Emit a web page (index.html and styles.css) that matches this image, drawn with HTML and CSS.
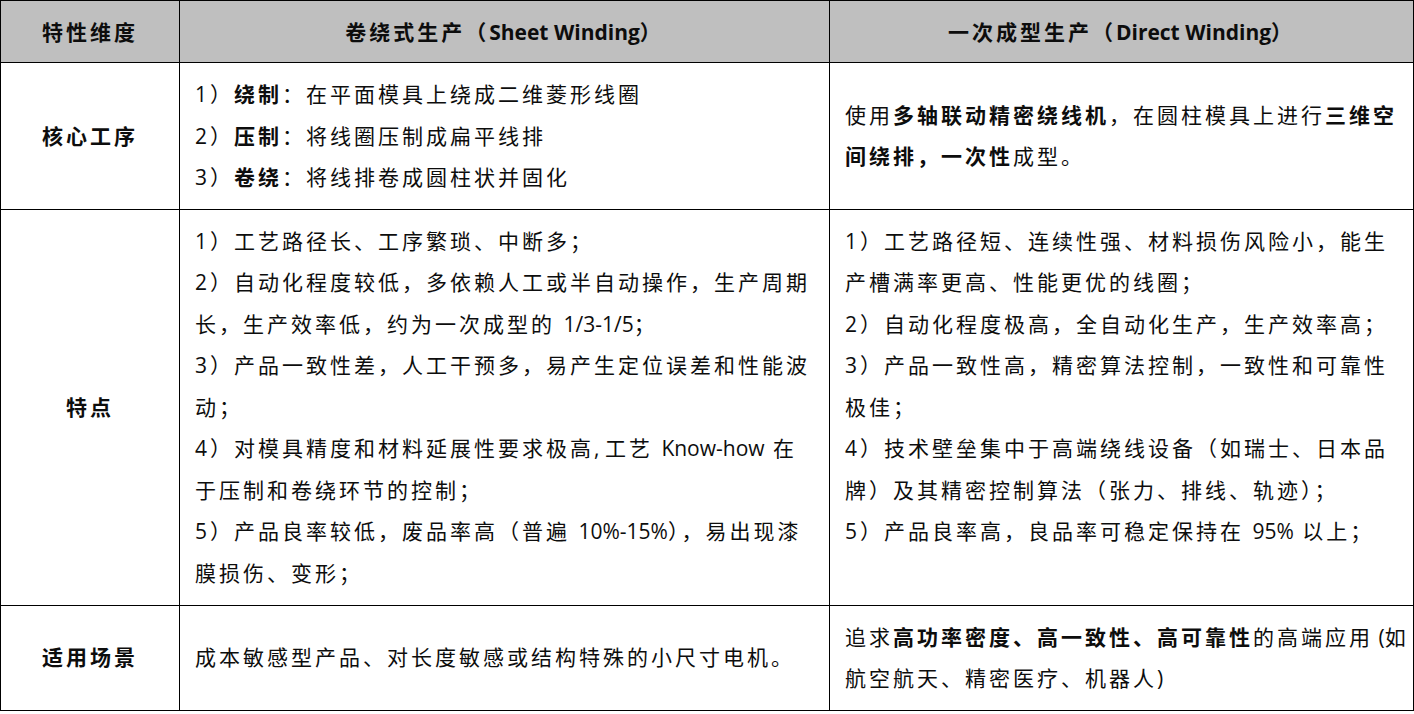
FILE: index.html
```html
<!DOCTYPE html>
<html lang="zh-CN">
<head>
<meta charset="utf-8">
<title>卷绕式生产 vs 一次成型生产</title>
<link rel="stylesheet" href="styles.css">
</head>
<body>
<table class="cmp">
  <colgroup>
    <col class="c1">
    <col class="c2">
    <col class="c3">
  </colgroup>
  <thead>
    <tr>
      <th>特性维度</th>
      <th>卷绕式生产（<span class="lat">Sheet Winding</span>）</th>
      <th>一次成型生产（<span class="lat">Direct Winding</span>）</th>
    </tr>
  </thead>
  <tbody>
    <tr class="r1">
      <td class="dim">核心工序</td>
      <td>1）<b>绕制</b>：在平面模具上绕成二维菱形线圈<br>2）<b>压制</b>：将线圈压制成扁平线排<br>3）<b>卷绕</b>：将线排卷成圆柱状并固化</td>
      <td>使用<b>多轴联动精密绕线机</b>，在圆柱模具上进行<b>三维空<br>间绕排，一次性</b>成型。</td>
    </tr>
    <tr class="r2">
      <td class="dim">特点</td>
      <td>1）工艺路径长、工序繁琐、中断多；<br>2）自动化程度较低，多依赖人工或半自动操作，生产周期<br>长，生产效率低，约为一次成型的 <span class="lat">1/3-1/5</span>；<br>3）产品一致性差，人工干预多，易产生定位误差和性能波<br>动；<br>4）对模具精度和材料延展性要求极高<span class="lat">, </span>工艺 <span class="lat">Know-how</span> 在<br>于压制和卷绕环节的控制；<br>5）产品良率较低，废品率高（普遍 <span class="lat">10%-15%</span>），易出现漆<br>膜损伤、变形；</td>
      <td class="top">1）工艺路径短、连续性强、材料损伤风险小，能生<br>产槽满率更高、性能更优的线圈；<br>2）自动化程度极高，全自动化生产，生产效率高；<br>3）产品一致性高，精密算法控制，一致性和可靠性<br>极佳；<br>4）技术壁垒集中于高端绕线设备（如瑞士、日本品<br>牌）及其精密控制算法（张力、排线、轨迹）；<br>5）产品良率高，良品率可稳定保持在 <span class="lat">95%</span> 以上；</td>
    </tr>
    <tr class="r3">
      <td class="dim">适用场景</td>
      <td>成本敏感型产品、对长度敏感或结构特殊的小尺寸电机。</td>
      <td>追求<b>高功率密度、高一致性、高可靠性</b>的高端应用<span class="lat"> (</span>如<br>航空航天、精密医疗、机器人<span class="lat">)</span></td>
    </tr>
  </tbody>
</table>
</body>
</html>
```

FILE: styles.css
```css
html, body {
  margin: 0;
  padding: 0;
  background: #ffffff;
}

body {
  font-family: "Open Sans", "Noto Sans CJK SC", sans-serif;
  color: #0d0d0d;
}

.cmp {
  border-collapse: collapse;
  table-layout: fixed;
  width: 1413px;
  font-size: 21px;
  letter-spacing: 3px;
  line-height: 41.5px;
}

.c1 { width: 179px; }
.c2 { width: 650px; }
.c3 { width: 584px; }

.cmp th,
.cmp td {
  border: 1px solid #000000;
  padding: 11px 8px 10px 15px;
  vertical-align: middle;
  text-align: left;
  white-space: nowrap;
}

.cmp th {
  background: #bfbfbf;
  font-weight: 700;
  text-align: center;
  padding: 11px 8px 10px 8px;
  line-height: 40px;
  height: 40px;
}

.cmp td.dim {
  text-align: center;
  font-weight: 700;
  padding-left: 8px;
}

.cmp td.top {
  vertical-align: top;
}

.cmp b {
  font-weight: 700;
}

.lat {
  letter-spacing: 0;
}

.r1 td { height: 124px; }
.r2 td { height: 374px; }
.r3 td { height: 83px; }
```
